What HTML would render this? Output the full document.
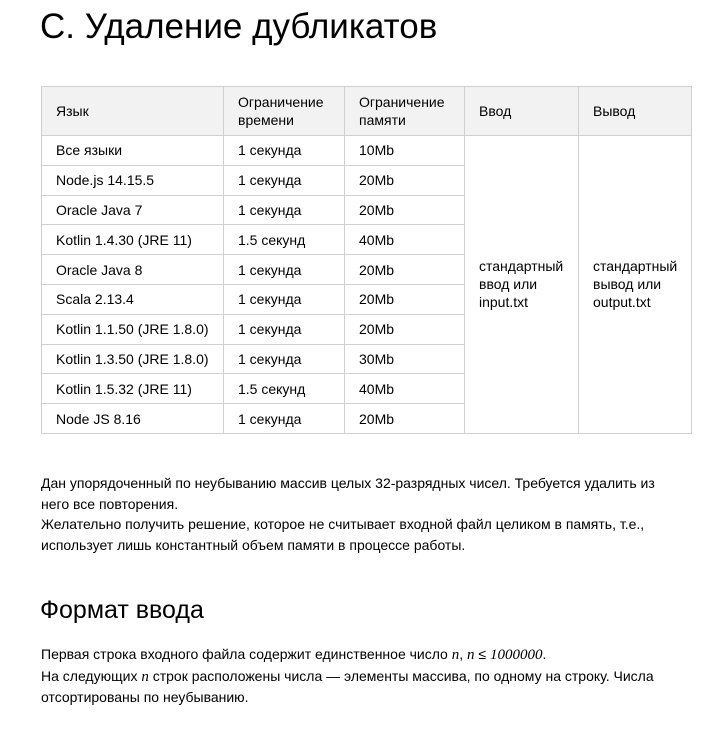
<!DOCTYPE html>
<html><head><meta charset="utf-8"><style>
body{margin:0;background:#fff;font-family:"Liberation Sans","Noto Sans CJK SC",sans-serif;color:#000;width:702px;height:732px;overflow:hidden;position:relative}
h1{position:absolute;left:40px;top:5px;margin:0;font-size:35px;font-weight:normal;line-height:44px}
table{position:absolute;left:41px;top:86px;border-collapse:collapse;font-size:14px}
td,th{border:1px solid #d0d0d0;padding:0 14px;text-align:left;font-weight:normal;height:28.8px;vertical-align:middle;line-height:18px}
th{background:#f2f2f2;height:48px}
.p{position:absolute;left:41px;font-size:14px;line-height:20.5px;width:640px}
h2{position:absolute;left:40px;top:594px;margin:0;font-size:25px;font-weight:normal;line-height:32px}
i{font-family:"Liberation Serif",serif;font-size:15px}
</style></head><body>
<h1>C. Удаление дубликатов</h1>
<table>
<tr><th style="width:153px">Язык</th><th style="width:92px">Ограничение<br>времени</th><th style="width:91px">Ограничение<br>памяти</th><th style="width:85px">Ввод</th><th style="width:83px">Вывод</th></tr>
<tr><td>Все языки</td><td>1 секунда</td><td>10Mb</td><td rowspan="10">стандартный<br>ввод или<br>input.txt</td><td rowspan="10">стандартный<br>вывод или<br>output.txt</td></tr>
<tr><td>Node.js 14.15.5</td><td>1 секунда</td><td>20Mb</td></tr>
<tr><td>Oracle Java 7</td><td>1 секунда</td><td>20Mb</td></tr>
<tr><td>Kotlin 1.4.30 (JRE 11)</td><td>1.5 секунд</td><td>40Mb</td></tr>
<tr><td>Oracle Java 8</td><td>1 секунда</td><td>20Mb</td></tr>
<tr><td>Scala 2.13.4</td><td>1 секунда</td><td>20Mb</td></tr>
<tr><td>Kotlin 1.1.50 (JRE 1.8.0)</td><td>1 секунда</td><td>20Mb</td></tr>
<tr><td>Kotlin 1.3.50 (JRE 1.8.0)</td><td>1 секунда</td><td>30Mb</td></tr>
<tr><td>Kotlin 1.5.32 (JRE 11)</td><td>1.5 секунд</td><td>40Mb</td></tr>
<tr><td>Node JS 8.16</td><td>1 секунда</td><td>20Mb</td></tr>
</table>
<div class="p" style="top:473px">Дан упорядоченный по неубыванию массив целых 32-разрядных чисел. Требуется удалить из него все повторения.<br>Желательно получить решение, которое не считывает входной файл целиком в память, т.е., использует лишь константный объем памяти в процессе работы.</div>
<h2>Формат ввода</h2>
<div class="p" style="top:644px">Первая строка входного файла содержит единственное число <i>n</i>, <i>n</i> ≤ <i>1000000</i>.<br>На следующих <i>n</i> строк расположены числа — элементы массива, по одному на строку. Числа отсортированы по неубыванию.</div>
</body></html>
